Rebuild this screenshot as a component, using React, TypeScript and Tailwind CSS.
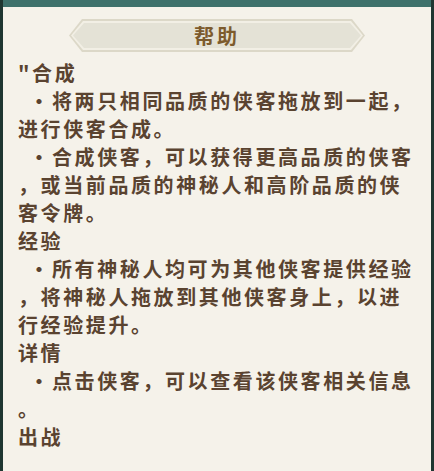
const lines: { bullet?: boolean; text: string }[] = [
  { text: "\"合成" },
  { bullet: true, text: "将两只相同品质的侠客拖放到一起，" },
  { text: "进行侠客合成。" },
  { bullet: true, text: "合成侠客，可以获得更高品质的侠客" },
  { text: "，或当前品质的神秘人和高阶品质的侠" },
  { text: "客令牌。" },
  { text: "经验" },
  { bullet: true, text: "所有神秘人均可为其他侠客提供经验" },
  { text: "，将神秘人拖放到其他侠客身上，以进" },
  { text: "行经验提升。" },
  { text: "详情" },
  { bullet: true, text: "点击侠客，可以查看该侠客相关信息" },
  { text: "。" },
  { text: "出战" },
];

export default function App() {
  return (
    <div className="w-[434px] h-[471px] flex flex-col bg-[#f5f2ea] border-l-[3px] border-r-[3px] border-[#1f3631] font-['Noto_Sans_CJK_SC',sans-serif] overflow-hidden">
      <div className="h-[7px] bg-[#3e716b] shrink-0" />

      {/* title banner */}
      <div className="flex justify-center mt-[12px]">
        <div className="w-[296px] h-[33px] p-[2px] bg-[#dcd8c8] [clip-path:polygon(13px_0,283px_0,296px_50%,283px_100%,13px_100%,0_50%)]">
          <div className="w-full h-full p-[2px] bg-[#f2efe5] [clip-path:polygon(12px_0,280px_0,292px_50%,280px_100%,12px_100%,0_50%)]">
            <div className="w-full h-full flex items-center justify-center bg-[#e4e2d6] [clip-path:polygon(11px_0,277px_0,288px_50%,277px_100%,11px_100%,0_50%)]">
              <span className="text-[20px] leading-none font-semibold tracking-[3px] text-[#7d5b2d]">帮助</span>
            </div>
          </div>
        </div>
      </div>

      <div className="mt-[7px] pl-[15px] text-[20px] leading-[28px] font-semibold tracking-[2.6px] text-[#5a4330] whitespace-nowrap">
        {lines.map((l, i) => (
          <div key={i}>
            {l.bullet && <span className="inline-block w-[34px] pl-[11px] tracking-normal">•</span>}
            {l.text}
          </div>
        ))}
      </div>
    </div>
  );
}
